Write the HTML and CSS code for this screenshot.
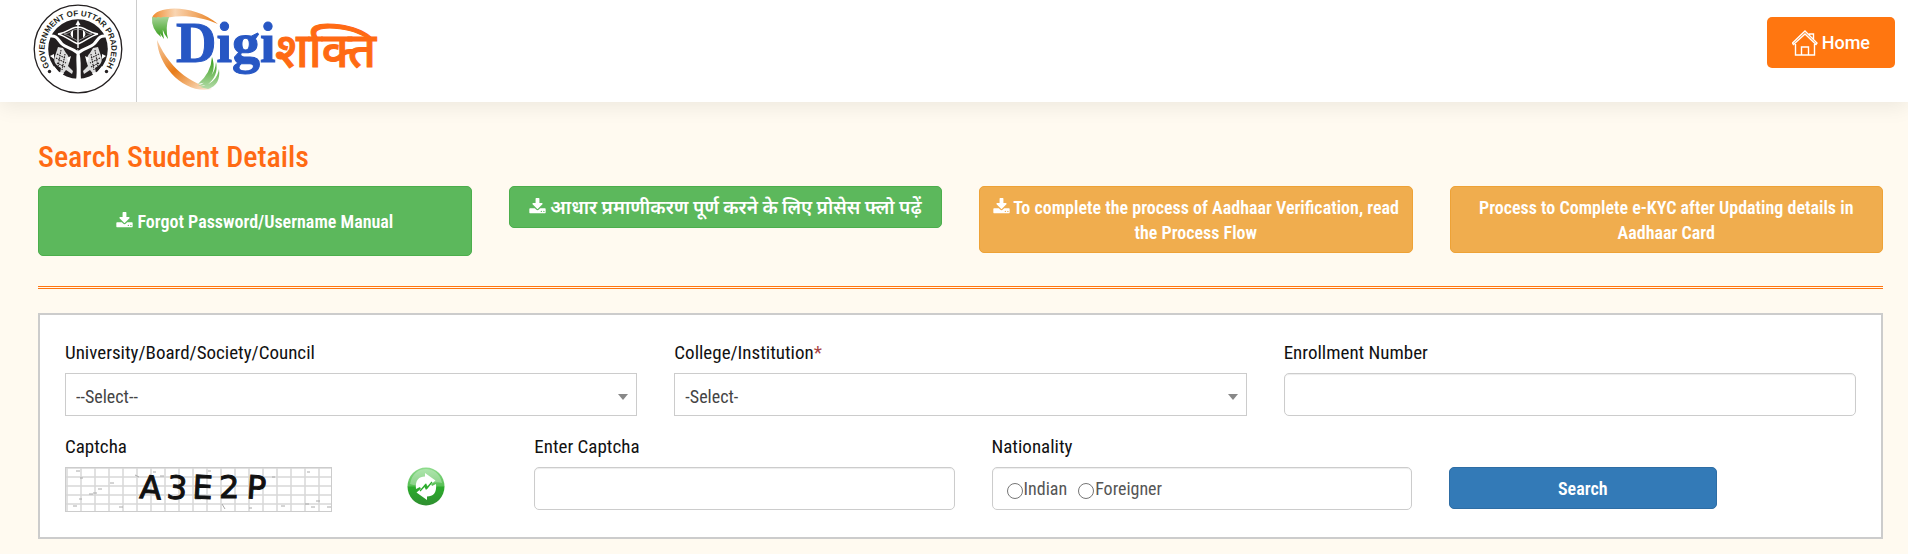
FILE: index.html
```
<!DOCTYPE html>
<html lang="en">
<head>
    <meta charset="utf-8">
    <title>Digi Shakti</title>
    <meta name="viewport" content="width=device-width, initial-scale=1.0">
    <link rel="stylesheet" href="styles.css">
</head>
<body>
    <header class="header">
        <a href="#" class="emblem" aria-label="Government of Uttar Pradesh">
            <svg width="90" height="90" viewBox="0 0 90 90">
                <defs>
                    <path id="ring" d="M16.500 62.500A33.300 33.300 0 1 1 73.500 62.500"/>
                </defs>
                <circle cx="45" cy="45" r="43.800" fill="#fff" stroke="#231f20" stroke-width="1.300"/>
                <text class="ring-text"><textPath href="#ring" startOffset="50%">GOVERNMENT OF UTTAR PRADESH</textPath></text>
                <circle cx="16.500" cy="67.500" r="1.700" fill="#231f20"/>
                <circle cx="73.500" cy="67.500" r="1.700" fill="#231f20"/>
                <circle cx="45" cy="45" r="29.800" fill="#231f20"/>
                <!-- rivers -->
                <path d="M17 32c7-1 8 4 12 8s9 3 16 9c7-6 12-5 16-9s5-9 12-8" fill="none" stroke="#fff" stroke-width="3"/>
                <path d="M45 48c-2 8 1 16-1 28h3c-1-12 1-20-2-28z" fill="#fff" stroke="#fff" stroke-width="2"/>
                <!-- bow and arrow -->
                <path d="M45 18v26M25 30c9-1 13-7 20-7s11 6 20 7c-8 2-12 7-20 10c-8-3-12-8-20-10z" fill="none" stroke="#fff" stroke-width="1.400"/>
                <path d="M31 30c6 0 8-5 14-5s8 5 14 5c-6 2-8 4-14 7c-6-3-8-5-14-7z" fill="none" stroke="#aaa" stroke-width=".8"/>
                <path d="M42.500 21l2.500-5 2.500 5zM40 26q-5 4 0 8zM50 26q5 4 0 8z" fill="#fff"/>
                <!-- fishes -->
                <g id="fish">
                    <path d="M25 43l5 1 3 5c4 4 4 9 2 13l5 5-1 3-6-4-4 5-2-2 1-5c-6-3-8-7-6-12z" fill="#ddd"/>
                    <path d="M21 50l-4 2 4 3zM34 54l4-2-2 7zM21 62l-3 4 7 1zM26 68l3 4 2-3z" fill="#fff"/>
                    <path d="M24 50l8 4M23 54l10 5M24 59l8 4M28 46l-3 17M32 50l-3 16" fill="none" stroke="#231f20" stroke-width="1.100" stroke-dasharray="1.500 1"/>
                </g>
                <use href="#fish" transform="matrix(-1 0 0 1 90 0)"/>
            </svg>
        </a>
        <a href="#" class="logo" aria-label="Digi Shakti">
            <svg width="234" height="88" viewBox="148 5 234 88">
                <defs>
                    <linearGradient id="topArc"><stop offset="0" stop-color="#ef8a2c"/><stop offset=".35" stop-color="#f9d5b2"/><stop offset="1" stop-color="#e87b17"/></linearGradient>
                    <linearGradient id="lowArc" x1="0" y1="0" x2=".9" y2="1"><stop offset="0" stop-color="#f7cfa8"/><stop offset=".5" stop-color="#e87b17"/><stop offset="1" stop-color="#fae3cb"/></linearGradient>
                    <linearGradient id="leafTop" x1="0" y1="0" x2="0" y2="1"><stop offset="0" stop-color="#a5d396"/><stop offset="1" stop-color="#2f9a12"/></linearGradient>
                    <linearGradient id="leafLow" x1="0" y1="0" x2="0" y2="1"><stop offset="0" stop-color="#2f9a12"/><stop offset="1" stop-color="#b5dca9"/></linearGradient>
                </defs>
                <path d="M152 18C156 5 194 4 218 24C198 15 174 14 160 20z" fill="url(#topArc)"/>
                <path d="M157 40C158 66 184 95 212 89C196 84 172 74 157 40z" fill="url(#lowArc)"/>
                <path d="M152 17q-1 12 9 20q-3-9-1-19zM157 17q-1 13 7 22q-3-12 1-21zM162 17q-2 13 6 22q-3-11 1-22z" fill="url(#leafTop)"/>
                <path d="M212 57q5 14-5 25l-9 2q13-11 14-27zM216 62q3 14-9 23l-9 1q17-8 18-24zM219 69q2 16-11 20l-8-2q17-4 19-18z" fill="url(#leafLow)"/>
                <text class="logo-digi" x="176" y="62">Digi</text>
                <text class="logo-shakti" x="275" y="67">शक्ति</text>
            </svg>
        </a>
        <a href="#" class="home">
            <svg width="26" height="26" viewBox="0 0 26 26" fill="none" stroke="#fff" stroke-width="1.400">
                <path d="M3.500 14v11h19V14M9.500 25v-8h7v8M1.500 14.500l-1-1.500L13 1l12 12-1 1.500L13 4z M17.500 5V4h4v5.500"/>
            </svg>
            Home
        </a>
    </header>

    <main class="content">
        <h2>Search Student Details</h2>
        <div class="links">
            <a href="#" class="btn success tall">
                <svg class="dl" viewBox="0 0 1664 1600"><use href="#download"/></svg>
                Forgot Password/Username Manual
            </a>
            <a href="#" class="btn success hindi">
                <svg class="dl" viewBox="0 0 1664 1600"><use href="#download"/></svg>
                आधार प्रमाणीकरण पूर्ण करने के लिए प्रोसेस फ्लो पढ़ें
            </a>
            <a href="#" class="btn warning">
                <svg class="dl" viewBox="0 0 1664 1600"><use href="#download"/></svg>
                To complete the process of Aadhaar Verification, read the Process Flow
            </a>
            <a href="#" class="btn warning">Process to Complete e-KYC after Updating details in Aadhaar Card</a>
        </div>
        <hr>

        <form class="panel">
            <div class="row three">
                <div class="field">
                    <label for="university">University/Board/Society/Council</label>
                    <select id="university"><option>--Select--</option></select>
                </div>
                <div class="field">
                    <label for="college">College/Institution<span class="req">*</span></label>
                    <select id="college"><option>-Select-</option></select>
                </div>
                <div class="field">
                    <label for="enrollment">Enrollment Number</label>
                    <input type="text" id="enrollment" class="control">
                </div>
            </div>
            <div class="row four">
                <div class="field">
                    <span class="label">Captcha</span>
                    <div class="captcha-row">
                        <svg class="captcha" viewBox="0 0 267 45" role="img" aria-label="Captcha image">
                            <defs>
                                <pattern id="grid" width="14" height="9" patternUnits="userSpaceOnUse">
                                    <path d="M2 0v9M0 1h14" stroke="#d8d8d8" stroke-width="1.500" fill="none"/>
                                </pattern>
                            </defs>
                            <rect width="267" height="45" fill="#fff"/>
                            <rect width="267" height="45" fill="url(#grid)"/>
                            <path d="M11 4h4M15 11h3M33 22h4M45 16h4M24 27h4M28 26h4M54 40h4M70 8l4 2M88 5h3M95 9h4M143 4h3M130 32h6M157 37l3 5M207 10h3M216 39h4M184 41h3M240 37h4M246 40h4M251 34h4M262 40h4M8 39h4M14 32h3M242 5h3" stroke="#aaa" stroke-width="1"/>
                            <text class="captcha-text" x="74 101 127 154 181" y="31" rotate="4 5 3 0 4">A3E2P</text>
                            <rect x=".5" y=".5" width="266" height="44" fill="none" stroke="#ccc"/>
                        </svg>
                        <button type="button" class="refresh" aria-label="Refresh captcha">
                            <svg width="38" height="39" viewBox="0 0 38 39">
                                <defs>
                                    <linearGradient id="ball" x1="0" y1="0" x2="0" y2="1"><stop offset="0" stop-color="#8fdc8d"/><stop offset=".48" stop-color="#58bf55"/><stop offset=".52" stop-color="#2bab2b"/><stop offset="1" stop-color="#2f8f31"/></linearGradient>
                                </defs>
                                <ellipse cx="19" cy="19.500" rx="18.500" ry="19" fill="url(#ball)"/>
                                <path d="M3 17C5 6 12 2 19 2s14 4 16 14C25 13 14 21 3 17z" fill="#fff" opacity=".3"/>
                                <path d="M9 22C8 13 12 9.500 18 9.500V6l10.500 7.500L21 20l-2-4-5 6-1-2z" fill="#fff"/>
                                <path d="M29 17C30 26 26 29.500 20 29.500V33L9.500 25.500L17 19l2 4 5-6 1 2z" fill="#fff"/>
                                <path d="M13 24l5.500-6 1.500 3 5-6" fill="none" stroke="#2bab2b" stroke-width="1.300"/>
                            </svg>
                        </button>
                    </div>
                </div>
                <div class="field">
                    <label for="captchaText">Enter Captcha</label>
                    <input type="text" id="captchaText" class="control">
                </div>
                <div class="field">
                    <span class="label" id="natLabel">Nationality</span>
                    <div class="control radios" role="radiogroup" aria-labelledby="natLabel">
                        <input type="radio" name="nationality" id="indian"><label for="indian">Indian</label>
                        <input type="radio" name="nationality" id="foreigner"><label for="foreigner">Foreigner</label>
                    </div>
                </div>
                <button type="submit" class="btn primary">Search</button>
            </div>
        </form>
    </main>

    <svg class="sprite">
        <symbol id="download" viewBox="0 0 1664 1600">
            <path fill="currentColor" d="M1280 1344q0-26-19-45t-45-19-45 19-19 45 19 45 45 19 45-19 19-45zm256 0q0-26-19-45t-45-19-45 19-19 45 19 45 45 19 45-19 19-45zm128-224v320q0 40-28 68t-68 28h-1472q-40 0-68-28t-28-68v-320q0-40 28-68t68-28h465l135 136q58 56 136 56t136-56l136-136h464q40 0 68 28t28 68zm-325-569q17 41-14 70l-448 448q-18 19-45 19t-45-19l-448-448q-31-29-14-70 17-39 59-39h256v-448q0-26 19-45t45-19h256q26 0 45 19t19 45v448h256q42 0 59 39z"/>
        </symbol>
    </svg>
</body>
</html>
```
FILE: styles.css
```
* { box-sizing: border-box; }
body {
    margin: 0;
    background-color: #fffaf0;
    color: #111;
    font-family: "Roboto Condensed", "Noto Sans", sans-serif;
    font-size: 18px;
    line-height: 26px;
}
.sprite { display: none; }

.header {
    display: flex;
    align-items: flex-start;
    height: 102px;
    padding: 0 13px 0 33px;
    background-color: #fff;
    box-shadow: 0 4px 20px rgba(0, 0, 0, 0.08);
}
.header svg { display: block; }
.emblem {
    height: 102px;
    padding: 4px 13px 0 0;
    border-right: 1px solid #ccc;
}
.ring-text {
    font-family: "Liberation Sans", sans-serif;
    font-size: 8px;
    font-weight: bold;
    fill: #231f20;
    text-anchor: middle;
}
.logo { padding: 5px 0 0 11px; }
.logo-digi {
    font-family: "Liberation Serif", serif;
    font-size: 56px;
    font-weight: bold;
    fill: #2757c4;
    stroke: #2757c4;
}
.logo-shakti {
    font-family: "Noto Sans Devanagari", "Noto Sans", sans-serif;
    font-size: 48px;
    font-weight: 500;
    fill: #ff6a13;
    stroke: #ff6a13;
}
.home {
    display: flex;
    align-items: center;
    gap: 4px;
    height: 51px;
    margin: 17px 0 0 auto;
    padding: 0 25px;
    border-radius: 5px;
    background-color: #ff7610;
    color: #fff;
    font-family: Roboto, sans-serif;
    font-weight: 500;
    text-decoration: none;
}

.content { padding: 38px 25px 15px 38px; }
h2 {
    margin: 0 0 12px;
    color: #ff6a13;
    font-size: 30px;
    font-weight: 500;
    line-height: 34px;
}
.links {
    display: grid;
    grid-template-columns: repeat(4, 1fr);
    gap: 37px;
    align-items: start;
}
.btn {
    display: block;
    padding: 8px 12px 7px;
    border: 1px solid;
    border-radius: 5px;
    color: #fff;
    font-family: inherit;
    font-size: 18px;
    font-weight: 600;
    line-height: 25px;
    text-align: center;
    text-decoration: none;
}
.btn.tall { padding: 22px 12px 21px; }
.btn.hindi { font-size: 19px; }
.success { background-color: #5cb85c; border-color: #4cae4c; }
.warning { background-color: #f0ad4e; border-color: #eea236; }
.primary { background-color: #337ab7; border-color: #2e6da4; }
.dl { width: 17px; height: 16px; }
hr {
    margin: 30px 0 24px;
    border: 0;
    border-top: 3px double #ff7610;
}

.panel {
    padding: 25px;
    border: 2px solid #ccc;
    background-color: #fff;
}
.row { display: grid; gap: 37px; }
.three { grid-template-columns: repeat(3, 1fr); }
.four {
    grid-template-columns: 432fr 420fr 420fr 407fr;
    margin-top: 18px;
}
.field > label, .label {
    display: block;
    margin-bottom: 7px;
    font-size: 19px;
}
.req { color: #a94442; }
.control, select {
    display: block;
    width: 100%;
    height: 43px;
    border: 1px solid #ccc;
    background-color: #fff;
    font-family: inherit;
    font-size: 18px;
}
.control {
    padding: 6px 12px;
    border-radius: 5px;
    box-shadow: inset 0 1px 1px rgba(0, 0, 0, 0.075);
    color: #555;
}
select {
    appearance: none;
    padding: 4px 28px 0 10px;
    border-radius: 0;
    color: #444;
    background: #fff url("data:image/svg+xml,%3Csvg xmlns='http://www.w3.org/2000/svg' width='10' height='6'%3E%3Cpath d='M0 0h10L5 6z' fill='%23888'/%3E%3C/svg%3E") no-repeat right 8px top 20px;
}
.captcha-row { display: flex; gap: 75px; }
.captcha { width: 267px; height: 45px; }
.captcha-text {
    font-family: "DejaVu Sans", sans-serif;
    font-size: 32px;
    fill: #111;
    stroke: #111;
}
.refresh {
    padding: 0;
    border: 0;
    background: none;
    height: 39px;
}
.radios {
    display: flex;
    align-items: center;
    padding: 0 14px;
}
.radios input {
    width: 16px;
    height: 16px;
    margin: 4px 1px 0 0;
}
.radios label { margin-right: 11px; }
.primary {
    align-self: start;
    width: 268px;
    margin-top: 33px;
}
```
